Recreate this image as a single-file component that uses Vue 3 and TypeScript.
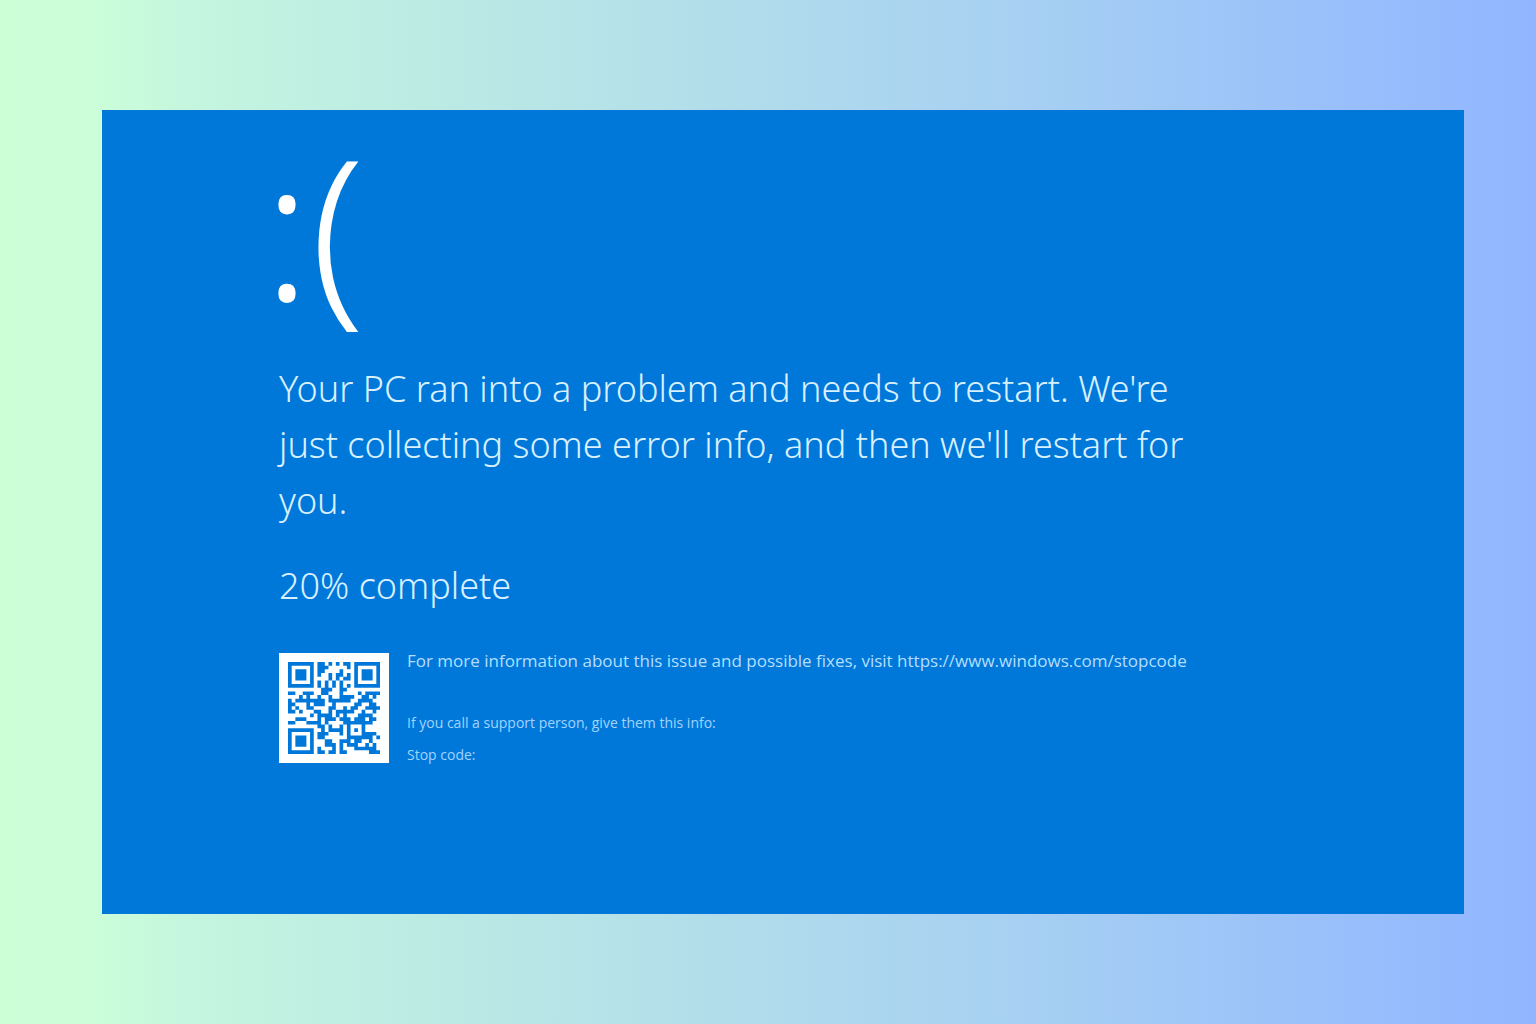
<script setup lang="ts">
const stopUrl = 'https://www.windows.com/stopcode'
const percent = 20

const SIZE = 25
const DATA_WORDS = 34
const EC_WORDS = 10
// Format bits for error correction level L with mask 4
const FORMAT = '110011000101111'

function gfMul(a: number, b: number): number {
  let r = 0
  for (let i = 7; i >= 0; i--) {
    r = (r << 1) ^ ((r >>> 7) * 0x11d)
    r ^= ((b >>> i) & 1) * a
  }
  return r
}

function errorWords(data: number[]): number[] {
  const gen: number[] = new Array(EC_WORDS).fill(0)
  gen[EC_WORDS - 1] = 1
  let root = 1
  for (let i = 0; i < EC_WORDS; i++) {
    for (let j = 0; j < EC_WORDS; j++) {
      gen[j] = gfMul(gen[j], root)
      if (j + 1 < EC_WORDS) gen[j] ^= gen[j + 1]
    }
    root = gfMul(root, 2)
  }
  const rem: number[] = new Array(EC_WORDS).fill(0)
  for (const word of data) {
    const factor = word ^ (rem.shift() as number)
    rem.push(0)
    gen.forEach((g, i) => { rem[i] ^= gfMul(g, factor) })
  }
  return rem
}

const toBits = (n: number, len: number) => n.toString(2).padStart(len, '0')

// Version 2 QR symbol, byte mode
function qrModules(text: string): boolean[][] {
  let bits = '0100' + toBits(text.length, 8)
  for (const ch of text) bits += toBits(ch.charCodeAt(0), 8)
  bits += '0000'
  const data: number[] = []
  for (let i = 0; i < DATA_WORDS; i++) data.push(parseInt(bits.slice(i * 8, i * 8 + 8), 2))
  const stream = [...data, ...errorWords(data)].map((w) => toBits(w, 8)).join('')

  const grid: (boolean | null)[][] = Array.from({ length: SIZE }, () => new Array(SIZE).fill(null))
  const square = (cr: number, cc: number, reach: number, light: number[]) => {
    for (let dr = -reach; dr <= reach; dr++) {
      for (let dc = -reach; dc <= reach; dc++) {
        const r = cr + dr
        const c = cc + dc
        if (r < 0 || c < 0 || r >= SIZE || c >= SIZE) continue
        grid[r][c] = !light.includes(Math.max(Math.abs(dr), Math.abs(dc)))
      }
    }
  }
  for (let i = 0; i < SIZE; i++) {
    grid[6][i] = i % 2 === 0
    grid[i][6] = i % 2 === 0
  }
  square(3, 3, 4, [2, 4])
  square(3, SIZE - 4, 4, [2, 4])
  square(SIZE - 4, 3, 4, [2, 4])
  square(18, 18, 2, [1])

  const f = [...FORMAT].map((b) => b === '1')
  for (let i = 0; i < 6; i++) {
    grid[8][i] = f[i]
    grid[5 - i][8] = f[9 + i]
  }
  grid[8][7] = f[6]
  grid[8][8] = f[7]
  grid[7][8] = f[8]
  for (let i = 0; i < 7; i++) grid[SIZE - 1 - i][8] = f[i]
  for (let i = 0; i < 8; i++) grid[8][SIZE - 8 + i] = f[7 + i]
  grid[SIZE - 8][8] = true

  let n = 0
  let up = true
  for (let right = SIZE - 1; right > 0; right -= 2) {
    if (right === 6) right = 5
    for (let step = 0; step < SIZE; step++) {
      const r = up ? SIZE - 1 - step : step
      for (const c of [right, right - 1]) {
        if (grid[r][c] !== null) continue
        const flip = (Math.floor(r / 2) + Math.floor(c / 3)) % 2 === 0
        grid[r][c] = (stream[n] === '1') !== flip
        n++
      }
    }
    up = !up
  }
  return grid as boolean[][]
}

const qrPath = qrModules(stopUrl)
  .flatMap((row, r) => row.map((dark, c) => (dark ? `M${c} ${r}h1v1h-1z` : '')))
  .join('')
</script>

<template>
  <div class="backdrop">
    <main class="screen">
      <div class="content">
        <p class="face">:(</p>
        <h1 class="message">
          Your PC ran into a problem and needs to restart. We're just collecting some error info, and then we'll restart for you.
        </h1>
        <p class="progress">{{ percent }}% complete</p>
        <section class="support">
          <svg class="qr" viewBox="0 0 25 25" role="img" aria-label="QR code">
            <path :d="qrPath" fill="#0078da" />
          </svg>
          <div class="details">
            <p class="more">
              For more information about this issue and possible fixes, visit
              <a :href="stopUrl">{{ stopUrl }}</a>
            </p>
            <p class="info">If you call a support person, give them this info:</p>
            <p class="info">Stop code:</p>
          </div>
        </section>
      </div>
    </main>
  </div>
</template>

<style>
body {
  margin: 0;
}
</style>

<style scoped>
.backdrop {
  box-sizing: border-box;
  display: flex;
  min-height: 100vh;
  padding: 110px 72px 110px 102px;
  background: linear-gradient(90deg, #ccffd6 0%, #ccffd8 5%, #c4f5df 13%, #b5e2e8 40%, #a7d0f2 66%, #92b7ff 98%, #91b6ff 100%);
}

.screen {
  box-sizing: border-box;
  flex: 1;
  padding: 12px 177px;
  background: #0078da;
  color: #d8f0ff;
  font-family: "Noto Sans", "Open Sans", sans-serif;
}

.content {
  max-width: 930px;
}

p,
h1 {
  margin: 0;
}

.face {
  margin-left: -16px;
  color: #fff;
  font-size: 195px;
  font-weight: 330;
  line-height: 208px;
}

.message,
.progress {
  font-size: 36px;
  font-weight: 350;
  line-height: 56px;
}

.message {
  margin-top: 31px;
}

.progress {
  margin-top: 29px;
}

.support {
  display: flex;
  gap: 18px;
  margin-top: 39px;
  font-family: "Open Sans", "Noto Sans", sans-serif;
}

.qr {
  box-sizing: border-box;
  flex: none;
  width: 110px;
  height: 110px;
  padding: 9px;
  background: #fff;
}

.more {
  margin-bottom: 38px;
  color: #b4deff;
  font-size: 17px;
  line-height: 16px;
}

.more a {
  color: inherit;
  text-decoration: none;
}

.info {
  color: #a0d4ff;
  font-size: 14px;
  line-height: 32px;
}
</style>
